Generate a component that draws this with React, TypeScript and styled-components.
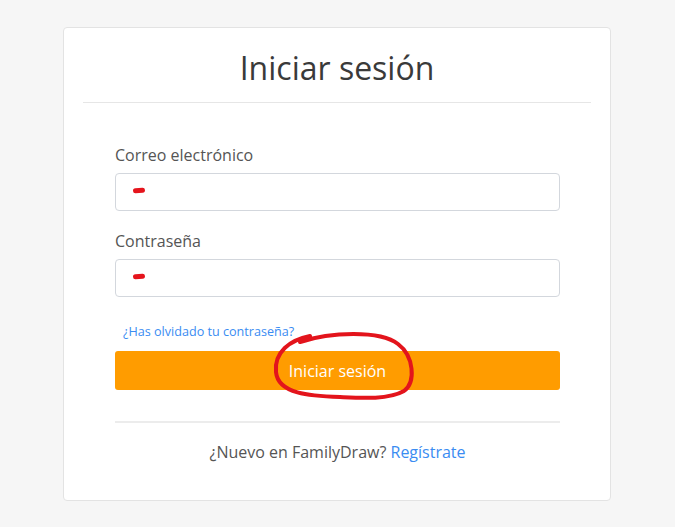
import React from "react";
import styled, { createGlobalStyle } from "styled-components";

const Global = createGlobalStyle`
  html, body { margin: 0; padding: 0; background: #f6f6f6; }
  body { font-family: "Open Sans", "Liberation Sans", sans-serif; }
  * { box-sizing: border-box; }
`;

const Page = styled.div`
  min-height: 527px;
  padding-top: 27px;
`;

const Card = styled.div`
  width: 548px;
  margin: 0 0 0 63px;
  background: #fff;
  border: 1px solid #e3e3e3;
  border-radius: 4px;
  padding: 18px 0 36px;
`;

const Header = styled.div`
  margin: 0 19px;
  padding-bottom: 13px;
  border-bottom: 1px solid #e6e6e6;
  text-align: center;
`;

const Title = styled.h1`
  margin: 0;
  font-size: 32px;
  line-height: 43px;
  font-weight: 400;
  color: #3a3a3a;
`;

const Body = styled.div`
  padding: 40px 50px 0 51px;
  display: flex;
  flex-direction: column;
`;

const Label = styled.label<{ $gap?: number }>`
  font-size: 16px;
  line-height: 24px;
  color: #555;
  margin-top: ${(p) => p.$gap ?? 0}px;
  margin-bottom: 6px;
`;

const FieldWrap = styled.div`
  position: relative;
`;

const Input = styled.input`
  display: block;
  width: 100%;
  height: 38px;
  border: 1px solid #d3d7dd;
  border-radius: 4px;
  background: #fff;
  font-family: inherit;
  font-size: 14px;
  padding: 0 12px;
  outline: none;
`;

const Scribble = styled.span`
  position: absolute;
  left: 18px;
  top: 15px;
  width: 12px;
  height: 5px;
  border-radius: 3px;
  background: #e5141c;
  transform: rotate(-4deg);
`;

const Link = styled.a`
  font-size: 12.6px;
  line-height: 18px;
  color: #3a8cf2;
  text-decoration: none;
  margin: 26px 0 0 8px;
  align-self: flex-start;
`;

const ButtonWrap = styled.div`
  position: relative;
  margin-top: 10px;
`;

const Button = styled.button`
  display: block;
  width: 100%;
  height: 39px;
  border: none;
  border-radius: 3px;
  background: #ff9c00;
  color: #fff;
  font-family: inherit;
  font-size: 16px;
  cursor: pointer;
`;

const Annotation = styled.svg`
  position: absolute;
  left: 155px;
  top: -23px;
  width: 150px;
  height: 78px;
  pointer-events: none;
  overflow: visible;
`;

const Divider = styled.hr`
  border: none;
  border-top: 2px solid #ececec;
  margin: 31px 0 0;
`;

const Footer = styled.p`
  margin: 17px 0 0;
  text-align: center;
  font-size: 16px;
  line-height: 24px;
  color: #555;
`;

const FooterLink = styled.a`
  color: #3a8cf2;
  text-decoration: none;
`;

export default function App() {
  return (
    <Page>
      <Global />
      <Card>
        <Header>
          <Title>Iniciar sesión</Title>
        </Header>
        <Body>
          <Label>Correo electrónico</Label>
          <FieldWrap>
            <Input type="email" />
            <Scribble />
          </FieldWrap>
          <Label $gap={18}>Contraseña</Label>
          <FieldWrap>
            <Input type="password" />
            <Scribble />
          </FieldWrap>
          <Link href="#">¿Has olvidado tu contraseña?</Link>
          <ButtonWrap>
            <Button>Iniciar sesión</Button>
            <Annotation viewBox="0 0 150 78">
              <path
                d="M 30 14 C 60 4, 110 2, 128 16 C 144 28, 146 54, 134 63 C 118 72, 90 70, 70 69 C 40 68, 8 66, 6 44 C 4 24, 20 12, 40 8"
                fill="none"
                stroke="#e3141c"
                strokeWidth="4"
                strokeLinecap="round"
                strokeLinejoin="round"
              />
            </Annotation>
          </ButtonWrap>
          <Divider />
          <Footer>
            ¿Nuevo en FamilyDraw? <FooterLink href="#">Regístrate</FooterLink>
          </Footer>
        </Body>
      </Card>
    </Page>
  );
}
